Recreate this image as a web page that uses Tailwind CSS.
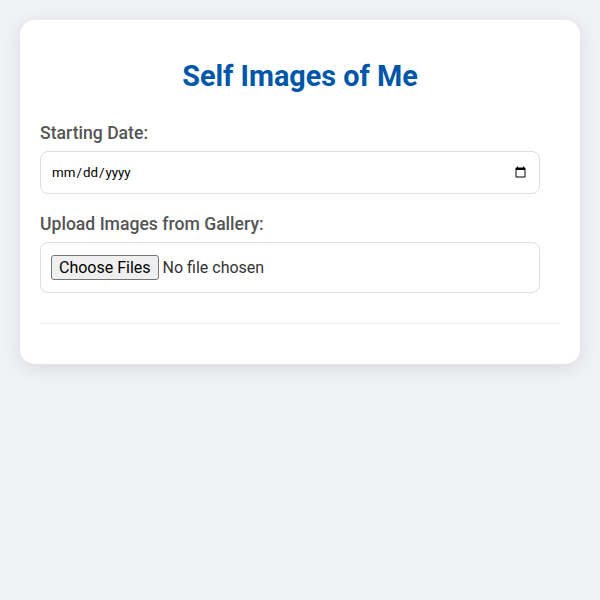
<!DOCTYPE html>
<html lang="en">
<head>
    <meta charset="UTF-8">
    <title>Self Images of Me</title>
    <script src="https://cdn.jsdelivr.net/npm/@tailwindcss/browser@4"></script>
</head>
<body class="bg-[#f0f2f5] font-[Roboto,sans-serif] min-h-[600px]">
    <div class="p-5">
        <div class="bg-white rounded-[15px] shadow-[0_4px_20px_rgba(0,0,0,0.1)] p-5 h-[344px]">
            <h1 class="text-[28.8px] font-bold text-[#0056a8] text-center mt-5 mb-[30px] leading-[33px]">Self Images of Me</h1>
            <div class="mb-5">
                <label for="start" class="block text-[17.6px] font-medium text-[#555] mb-[7px] leading-[21px]">Starting Date:</label>
                <input id="start" type="date" class="block w-[500px] h-[43px] p-2.5 border border-[#ddd] rounded-lg text-[13.33px] text-black">
            </div>
            <div class="mb-[30px]">
                <label for="files" class="block text-[17.6px] font-medium text-[#555] mb-[7px] leading-[21px]">Upload Images from Gallery:</label>
                <input id="files" type="file" multiple class="block w-[500px] h-[51px] pt-3 pb-2 px-2.5 border border-[#ddd] rounded-lg text-[16px] text-[#333] file:text-black file:bg-[#efefef] file:border file:border-[#767676] file:rounded-[3px] file:px-[7px] file:py-[1px] file:mr-1 file:leading-[21px]">
            </div>
            <hr class="border-[#eee]">
        </div>
    </div>
</body>
</html>
